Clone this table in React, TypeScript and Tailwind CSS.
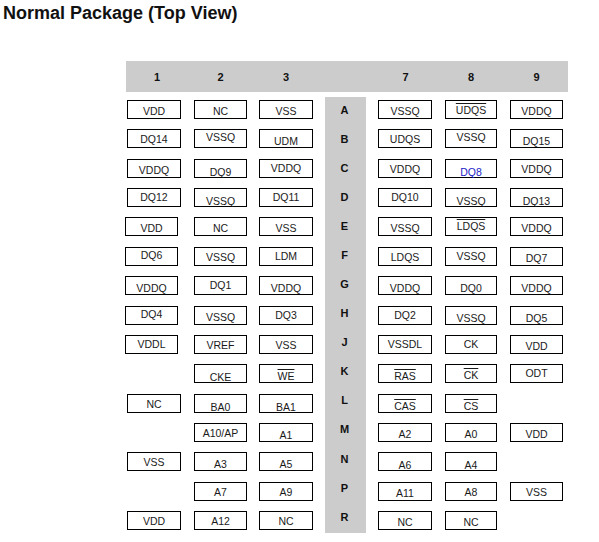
import React from "react";

type Cell = string | null;

const PT: Record<string, string> = {
  "-2": "pt-[1.5px]",
  "-1": "pt-[2.5px]",
  "0": "pt-[3.5px]",
  "1": "pt-[4.5px]",
  "2": "pt-[5.5px]",
  "3": "pt-[6.5px]",
  "4": "pt-[7.5px]",
};

const rows: { letter: string; left: Cell[]; right: Cell[]; shift?: boolean }[] = [
  { letter: "A", left: ["VDD|1", "NC|1", "VSS|1"], right: ["VSSQ|1", "~UDQS|0", "VDDQ|1"] },
  { letter: "B", left: ["DQ14|0", "VSSQ|-2", "UDM|2"], right: ["UDQS|0", "VSSQ|-2", "DQ15|2"] },
  { letter: "C", left: ["VDDQ|2", "DQ9|4", "VDDQ|0"], right: ["VDDQ|1", "*DQ8|4", "VDDQ|1"] },
  { letter: "D", left: ["DQ12|-1", "VSSQ|3", "DQ11|-1"], right: ["DQ10|-1", "VSSQ|3", "DQ13|3"] },
  { letter: "E", left: ["VDD|1", "NC|1", "VSS|1"], right: ["VSSQ|1", "~LDQS|-1", "VDDQ|1"], shift: true },
  { letter: "F", left: ["DQ6|-1", "VSSQ|1", "LDM|0"], right: ["LDQS|1", "VSSQ|0", "DQ7|2"], shift: true },
  { letter: "G", left: ["VDDQ|2", "DQ1|-1", "VDDQ|2"], right: ["VDDQ|2", "DQ0|2", "VDDQ|2"], shift: true },
  { letter: "H", left: ["DQ4|-1", "VSSQ|2", "DQ3|0"], right: ["DQ2|0", "VSSQ|3", "DQ5|3"], shift: true },
  { letter: "J", left: ["VDDL|0", "VREF|1", "VSS|1"], right: ["VSSDL|0", "CK|0", "VDD|2"], shift: true },
  { letter: "K", left: [null, "CKE|3", "~WE|2"], right: ["~RAS|2", "~CK|1", "ODT|-1"] },
  { letter: "L", left: ["NC|1", "BA0|4", "BA1|4"], right: ["~CAS|3", "~CS|3", null] },
  { letter: "M", left: [null, "A10/AP|1", "A1|3"], right: ["A2|2", "A0|2", "VDD|2"] },
  { letter: "N", left: ["VSS|0", "A3|2", "A5|2"], right: ["A6|3", "A4|3", null] },
  { letter: "P", left: [null, "A7|1", "A9|1"], right: ["A11|2", "A8|1", "VSS|1"] },
  { letter: "R", left: ["VDD|0", "A12|0", "NC|0"], right: ["NC|1", "NC|1", null] },
];

function Pin({ cell, box }: { cell: Cell; box: string }) {
  if (!cell) return null;
  let [label, dy] = cell.split("|");
  let over = false;
  let blue = false;
  if (label.startsWith("~")) {
    over = true;
    label = label.slice(1);
  }
  if (label.startsWith("*")) {
    blue = true;
    label = label.slice(1);
  }
  return (
    <div
      className={`${box} h-[19px] border border-black text-center text-[10.5px] leading-[10px] ${PT[dy]} ${
        blue ? "text-[#1c1cc8]" : "text-[#1a1a1a]"
      }`}
    >
      <span className={over ? "overline decoration-[1.2px]" : ""}>{label}</span>
    </div>
  );
}

export default function App() {
  return (
    <div className="min-h-[542px] w-[599px] bg-white" style={{ fontFamily: '"Liberation Sans", Arial, sans-serif' }}>
      <div className="pl-[3px] pt-[3px] text-[18px] font-bold leading-[20px] text-[#111]">
        Normal Package (Top View)
      </div>

      <div className="ml-[126px] mt-[38px] w-[442px]">
        {/* header */}
        <div className="flex h-[31px] items-center bg-[#cccccc] pt-[2px] text-[11px] font-bold text-[#111]">
          <div className="w-[67px]">
            <div className="ml-[1px] w-[54px] pl-[6px] text-center">1</div>
          </div>
          <div className="w-[65px]">
            <div className="ml-[1px] w-[53px] text-center">2</div>
          </div>
          <div className="w-[67px]">
            <div className="ml-[1px] w-[54px] text-center">3</div>
          </div>
          <div className="w-[41px]" />
          <div className="w-[78px]">
            <div className="ml-[13px] w-[53px] text-center">7</div>
          </div>
          <div className="w-[65px]">
            <div className="ml-[1px] w-[52px] text-center">8</div>
          </div>
          <div className="w-[59px]">
            <div className="ml-[1px] w-[53px] text-center">9</div>
          </div>
        </div>

        {/* body */}
        <div className="flex items-start">
          <div className="mt-[3px] flex w-[199px] flex-col">
            {rows.map((r) => (
              <div key={r.letter} className="flex h-[29.36px] pt-[5px]">
                <div className="w-[67px]">
                  <Pin cell={r.left[0]} box={r.shift ? "-ml-px w-[53px]" : "ml-[1px] w-[54px]"} />
                </div>
                <div className="w-[65px]">
                  <Pin cell={r.left[1]} box="ml-[1px] w-[53px]" />
                </div>
                <div className="w-[67px]">
                  <Pin cell={r.left[2]} box="ml-[1px] w-[54px]" />
                </div>
              </div>
            ))}
          </div>

          <div className="mt-[5px] flex h-[436px] w-[41px] flex-col bg-[#cccccc] text-[11px] font-bold text-[#111]">
            {rows.map((r) => (
              <div key={r.letter} className="flex h-[29.07px] items-center justify-center pb-[3px] pr-[2px]">
                {r.letter}
              </div>
            ))}
          </div>

          <div className="mt-[3px] flex w-[202px] flex-col">
            {rows.map((r) => (
              <div key={r.letter} className="flex h-[29.36px] pt-[5px]">
                <div className="w-[78px]">
                  <Pin cell={r.right[0]} box="ml-[12px] w-[54px]" />
                </div>
                <div className="w-[65px]">
                  <Pin cell={r.right[1]} box="ml-[1px] w-[52px]" />
                </div>
                <div className="w-[59px]">
                  <Pin cell={r.right[2]} box="ml-[1px] w-[53px]" />
                </div>
              </div>
            ))}
          </div>
        </div>
      </div>
    </div>
  );
}
